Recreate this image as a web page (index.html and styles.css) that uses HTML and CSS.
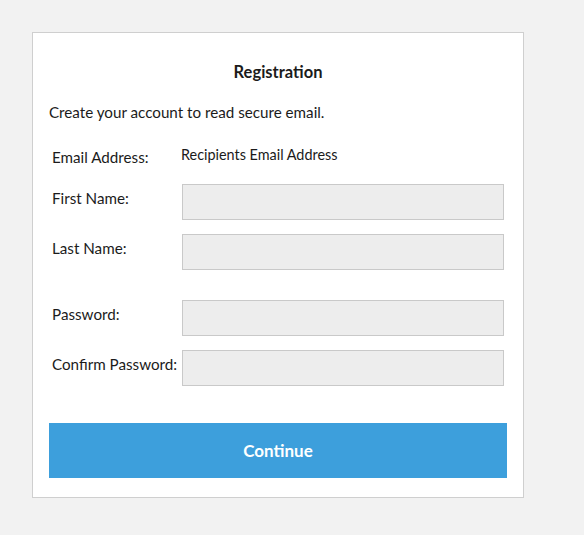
FILE: index.html
```html
<!DOCTYPE html>
<html>
<head>
<meta charset="utf-8">
<link rel="stylesheet" href="styles.css">
</head>
<body>
<div class="card">
  <h1 class="title">Registration</h1>
  <p class="intro">Create your account to read secure email.</p>
  <div class="row row-email">
    <span class="label">Email Address:</span>
    <span class="value">Recipients Email Address</span>
  </div>
  <div class="row row-first">
    <label class="label">First Name:</label>
    <input class="field" type="text">
  </div>
  <div class="row row-next">
    <label class="label">Last Name:</label>
    <input class="field" type="text">
  </div>
  <div class="row row-pass">
    <label class="label">Password:</label>
    <input class="field" type="password">
  </div>
  <div class="row row-next">
    <label class="label">Confirm Password:</label>
    <input class="field" type="password">
  </div>
  <button class="btn" type="button">Continue</button>
</div>
</body>
</html>
```
FILE: styles.css
```css
html, body {
  margin: 0;
  padding: 0;
  background: #f2f2f2;
}
body {
  padding: 32px;
  font-family: "Lato", "Open Sans", sans-serif;
  color: #1b1b1b;
}
.card {
  box-sizing: border-box;
  width: 492px;
  background: #fff;
  border: 1px solid #cfcfcf;
  padding: 27px 16px 19px 16px;
}
.title {
  margin: 0;
  text-align: center;
  font-size: 16.5px;
  font-weight: 700;
  line-height: 24px;
}
.intro {
  margin: 18px 0 0 0;
  font-size: 15.2px;
  line-height: 20px;
}
.row {
  display: flex;
  align-items: flex-start;
}
.label {
  box-sizing: border-box;
  width: 133px;
  padding-left: 3px;
  font-size: 15.2px;
  line-height: 20px;
  white-space: nowrap;
}
.row-email {
  margin-top: 25px;
}
.value {
  font-size: 14.4px;
  line-height: 18px;
  margin-top: -1px;
  margin-left: -1px;
}
.row-first { margin-top: 17px; }
.row-next { margin-top: 14px; }
.row-pass { margin-top: 30px; }
.row-first .label, .row-next .label, .row-pass .label {
  padding-top: 4px;
}
.field {
  box-sizing: border-box;
  width: 322px;
  height: 36px;
  margin: 0;
  background: #ededed;
  border: 1px solid #c9c9c9;
  border-radius: 0;
  padding: 0 8px;
  font-family: inherit;
}
.btn {
  display: block;
  width: 458px;
  height: 55px;
  margin-top: 37px;
  background: #3d9fdc;
  color: #fff;
  border: none;
  border-radius: 0;
  font-family: inherit;
  font-size: 17px;
  font-weight: 700;
}
```
